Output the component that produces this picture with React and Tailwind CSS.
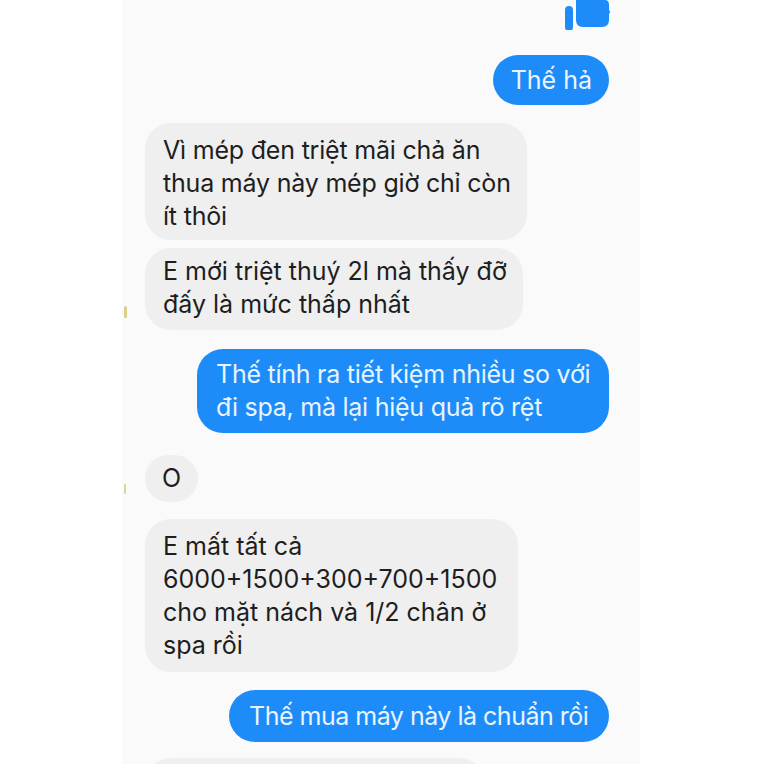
import React from 'react';

const font = { fontFamily: '"Inter", "Roboto", sans-serif' };

const Incoming = ({ lines, className = '' }) => (
  <div className={`shrink-0 self-start bg-[#efefef] text-[#1e1e1e] rounded-[26px] px-[18px] whitespace-nowrap ${className}`}>
    {lines.map((l, i) => (
      <div key={i}>{l}</div>
    ))}
  </div>
);

const Outgoing = ({ lines, className = '' }) => (
  <div className={`shrink-0 self-end bg-[#1d8cf8] text-[#eaf4ff] rounded-[26px] px-[19px] whitespace-nowrap ${className}`}>
    {lines.map((l, i) => (
      <div key={i}>{l}</div>
    ))}
  </div>
);

const LikeIcon = () => (
  <svg width="46" height="32" viewBox="0 0 46 32" fill="#1d8cf8">
    <rect x="0" y="6" width="8" height="25" rx="4" />
    <path d="M11 0 H40 Q44 0 44 5 V10 Q46 12 44 14 V20 Q44 27 37 27 H18 Q11 27 11 20 Z" />
  </svg>
);

export default function App() {
  return (
    <div className="w-[764px] h-[764px] bg-white overflow-hidden flex" style={font}>
      <div className="w-[518px] ml-[122px] h-full bg-[#fafafa] relative flex flex-col pl-[23px] pr-[31px] text-[25px] leading-[33px]">
        <div className="shrink-0 self-end h-[30px] mr-[-2px] overflow-hidden">
          <LikeIcon />
        </div>

        <Outgoing className="mt-[25px] h-[50px] flex items-center pl-[18px] pr-[17px]" lines={['Thế hả']} />

        <Incoming
          className="mt-[18px] pt-[11px] pb-[7px] w-[382px] tracking-[-0.2px]"
          lines={['Vì mép đen triệt mãi chả ăn', 'thua máy này mép giờ chỉ còn', 'ít thôi']}
        />

        <Incoming
          className="mt-[8px] pt-[7px] pb-[9px] w-[378px]"
          lines={['E mới triệt thuý 2l mà thấy đỡ', 'đấy là mức thấp nhất']}
        />

        <Outgoing
          className="mt-[19px] pt-[9px] pb-[9px] w-[412px] tracking-[-0.25px]"
          lines={['Thế tính ra tiết kiệm nhiều so với', 'đi spa, mà lại hiệu quả rõ rệt']}
        />

        <div className="shrink-0 mt-[22px] self-start bg-[#efefef] text-[#1e1e1e] rounded-full w-[53px] h-[47px] flex items-center justify-center">
          O
        </div>

        <Incoming
          className="mt-[17px] pt-[11px] pb-[10px] w-[373px]"
          lines={['E mất tất cả', '6000+1500+300+700+1500', 'cho mặt nách và 1/2 chân ở', 'spa rồi']}
        />

        <Outgoing className="mt-[18px] h-[52px] flex items-center pl-[20px] w-[380px] tracking-[-0.5px]" lines={['Thế mua máy này là chuẩn rồi']} />

        <div className="shrink-0 mt-[16px] self-start bg-[#efefef] rounded-t-[26px] w-[340px] h-[30px]" />

        <span className="absolute left-[2px] top-[306px] w-[3px] h-[12px] rounded-full bg-[#d9cf8a]" />
        <span className="absolute left-[2px] top-[484px] w-[2px] h-[10px] rounded-full bg-[#d9d49a]" />
      </div>
    </div>
  );
}
